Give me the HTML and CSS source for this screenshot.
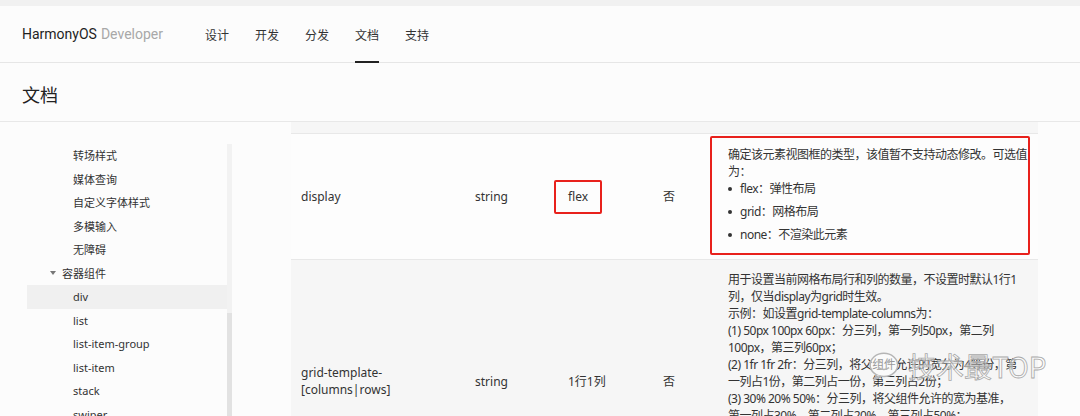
FILE: index.html
```html
<!DOCTYPE html>
<html lang="zh-CN">
<head>
  <meta charset="UTF-8">
  <meta name="viewport" content="width=device-width, initial-scale=1.0">
  <title>文档 - HarmonyOS Developer</title>
  <link rel="stylesheet" href="styles.css">
</head>
<body>
  <div class="top-strip"></div>

  <header class="site-header">
    <div class="logo">HarmonyOS <span class="logo-sub">Developer</span></div>
    <nav class="nav">
      <a href="#">设计</a>
      <a href="#">开发</a>
      <a href="#">分发</a>
      <a href="#" class="active">文档</a>
      <a href="#">支持</a>
    </nav>
  </header>

  <div class="page-title">
    <h1>文档</h1>
  </div>

  <div class="main">
    <aside class="sidebar">
      <ul class="tree">
        <li class="leaf">转场样式</li>
        <li class="leaf">媒体查询</li>
        <li class="leaf">自定义字体样式</li>
        <li class="leaf">多模输入</li>
        <li class="leaf">无障碍</li>
        <li class="group"><span class="caret"></span>容器组件</li>
        <li class="leaf current">div</li>
        <li class="leaf">list</li>
        <li class="leaf">list-item-group</li>
        <li class="leaf">list-item</li>
        <li class="leaf">stack</li>
        <li class="leaf">swiper</li>
      </ul>
      <div class="scrollbar"><div class="thumb"></div></div>
    </aside>

    <section class="content">
      <div class="row-tail"></div>
      <table class="attr-table">
        <colgroup>
          <col class="c-name">
          <col class="c-type">
          <col class="c-default">
          <col class="c-required">
          <col class="c-desc">
        </colgroup>
        <tr class="row-plain">
          <td>display</td>
          <td>string</td>
          <td><span class="mark-inline">flex</span></td>
          <td>否</td>
          <td class="desc marked">
            <div class="mark-box">
              <p>确定该元素视图框的类型，该值暂不支持动态修改。可选值<br>为：</p>
              <ul class="opts">
                <li>flex：弹性布局</li>
                <li>grid：网格布局</li>
                <li>none：不渲染此元素</li>
              </ul>
            </div>
          </td>
        </tr>
        <tr class="row-alt">
          <td>grid-template-<br>[columns|rows]</td>
          <td>string</td>
          <td>1行1列</td>
          <td>否</td>
          <td class="desc">
            用于设置当前网格布局行和列的数量，不设置时默认1行1<br>列，仅当display为grid时生效。<br>
            示例：如设置grid-template-columns为：<br>
            (1) 50px 100px 60px：分三列，第一列50px，第二列<br>100px，第三列60px；<br>
            (2) 1fr 1fr 2fr：分三列，将父组件允许的宽分为4等份，第<br>一列占1份，第二列占一份，第三列占2份；<br>
            (3) 30% 20% 50%：分三列，将父组件允许的宽为基准，<br>第一列占30%，第二列占20%，第三列占50%；<br>
            (4) repeat(2,100px)：分两列，第一列100px，第二<br>列100px；<br>
            (5) auto 1fr 1fr：分三列，第一列自适应内部子组件所<br>需宽度，剩余空间分为两等份。
          </td>
        </tr>
      </table>
    </section>

    <div class="watermark">
      <svg class="wm-icon" width="36" height="30" viewBox="0 0 34 28">
        <ellipse cx="15" cy="13" rx="13" ry="11" fill="rgba(255,255,255,0.5)" stroke="#b5b5b5" stroke-width="1.4"/>
        <path d="M8 22 L6 27 L12 23.5" fill="rgba(255,255,255,0.5)" stroke="#b5b5b5" stroke-width="1.4"/>
        <circle cx="10.5" cy="10" r="1.6" fill="#b5b5b5"/>
        <circle cx="19.5" cy="10" r="1.6" fill="#b5b5b5"/>
        <path d="M10 15.5 Q15 19 20 15.5" fill="none" stroke="#b5b5b5" stroke-width="1.3"/>
      </svg>
      <span>技术最TOP</span>
    </div>
  </div>
</body>
</html>
```

FILE: styles.css
```css
/* page */
body {
  margin: 0;
  height: 416px;
  overflow: hidden;
  background-color: #fcfcfc;
  color: #333;
  font-family: "Noto Sans", "Noto Sans CJK SC", sans-serif;
}
ul {
  margin: 0;
  padding: 0;
  list-style: none;
}
.top-strip {
  height: 6px;
  background-color: #f1f1f1;
}

/* header */
.site-header {
  display: flex;
  height: 56px;
  padding-left: 22px;
  border-bottom: 1px solid #e6e6e6;
  background-color: #fcfcfc;
}
.logo {
  width: 183px;
  display: flex;
  align-items: center;
  gap: 4px;
  font-family: Roboto, "Noto Sans", sans-serif;
  font-size: 14px;
  color: #1f1f1f;
}
.logo-sub {
  color: #a8a8a8;
}
.nav {
  display: flex;
  gap: 26px;
}
.nav a {
  display: flex;
  align-items: center;
  width: 24px;
  font-family: "Noto Sans CJK SC", sans-serif;
  font-size: 12px;
  color: #333;
  text-decoration: none;
  box-sizing: border-box;
  border-bottom: 2px solid transparent;
  margin-bottom: -1px;
  padding-top: 2px;
}
.nav a.active {
  border-bottom-color: #222;
}

/* page title */
.page-title {
  display: flex;
  align-items: center;
  height: 59px;
  padding: 3px 0 0 22px;
  box-sizing: border-box;
  border-bottom: 1px solid #e8e8e8;
}
.page-title h1 {
  margin: 0;
  font-family: "Noto Sans CJK SC", sans-serif;
  font-size: 18px;
  font-weight: normal;
  color: #222;
}

/* main area */
.main {
  position: relative;
  display: flex;
}
.sidebar {
  display: flex;
  width: 206px;
  padding: 22px 0 0 27px;
  height: 300px;
}
.tree {
  width: 200px;
  font-size: 11px;
  color: #333;
}
.tree li {
  height: 23.5px;
  line-height: 23.5px;
}
.tree .leaf {
  padding-left: 46px;
}
.tree .group {
  display: flex;
  align-items: center;
  padding-left: 23px;
}
.tree .current {
  background-color: #f0f0f0;
}
.caret {
  width: 0;
  height: 0;
  border-left: 3px solid transparent;
  border-right: 3px solid transparent;
  border-top: 4px solid #777;
  margin-right: 6px;
}
.scrollbar {
  width: 5px;
  background-color: #f2f2f2;
}
.thumb {
  margin-top: 169px;
  height: 200px;
  background-color: #e2e2e2;
}

/* attribute table */
.content {
  margin-left: 58px;
  width: 747px;
}
.row-tail {
  height: 11px;
  background-color: #f6f6f6;
  border-bottom: 1px solid #e8e8e8;
}
.attr-table {
  width: 747px;
  border-collapse: collapse;
  table-layout: fixed;
  font-size: 12px;
  color: #333;
}
.c-name { width: 174px; }
.c-type { width: 93px; }
.c-default { width: 95px; }
.c-required { width: 65px; }
.c-desc { width: 320px; }
.attr-table td {
  padding: 10px 10px;
  border-bottom: 1px solid #e8e8e8;
  vertical-align: middle;
  line-height: 17px;
}
.row-plain {
  background-color: #fdfdfd;
}
.row-alt {
  background-color: #f6f6f6;
}
.attr-table td.desc {
  padding: 11px 10px 10px 10px;
  white-space: nowrap;
  letter-spacing: -0.5px;
}
.attr-table td.marked {
  padding: 2px 0 4px 0;
}

/* red highlight marks */
.mark-inline {
  display: inline-block;
  margin-left: -14px;
  padding: 6px 12px 7px 12px;
  border: 2px solid #e8211c;
  border-radius: 2px;
}
.mark-box {
  width: 298px;
  margin-left: -8px;
  padding: 8px 2px 10px 16px;
  border: 2px solid #e8211c;
  border-radius: 2px;
}
.mark-box p {
  margin: 0;
}
.opts li {
  position: relative;
  margin-top: 6px;
  padding-left: 12px;
}
.opts li:first-child {
  margin-top: 0;
}
.opts li::before {
  content: "";
  position: absolute;
  left: 0;
  top: 7px;
  width: 4px;
  height: 4px;
  border-radius: 50%;
  background-color: #333;
}

/* watermark over the table */
.watermark {
  position: absolute;
  left: 868px;
  top: 224px;
  display: flex;
  align-items: center;
  gap: 4px;
  font-family: "Noto Sans CJK SC", sans-serif;
  font-size: 28px;
  color: rgba(255, 255, 255, 0.55);
  -webkit-text-stroke: 0.8px #a9a9a9;
}
```
